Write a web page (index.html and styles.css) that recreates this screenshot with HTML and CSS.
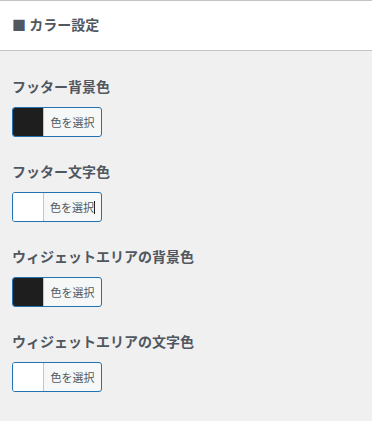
FILE: index.html
```html
<!DOCTYPE html>
<html lang="ja">
<head>
<meta charset="utf-8">
<link rel="stylesheet" href="styles.css">
</head>
<body>
<div class="header"><h3 class="section-title">■ カラー設定</h3></div>
<div class="controls">
  <div class="control">
    <span class="control-title">フッター背景色</span>
    <button class="color-result"><span class="swatch dark"></span><span class="result-text">色を選択</span></button>
  </div>
  <div class="control">
    <span class="control-title">フッター文字色</span>
    <button class="color-result"><span class="swatch light"></span><span class="result-text">色を選択<span class="caret"></span></span></button>
  </div>
  <div class="control">
    <span class="control-title">ウィジェットエリアの背景色</span>
    <button class="color-result"><span class="swatch dark"></span><span class="result-text">色を選択</span></button>
  </div>
  <div class="control">
    <span class="control-title">ウィジェットエリアの文字色</span>
    <button class="color-result"><span class="swatch light"></span><span class="result-text">色を選択</span></button>
  </div>
</div>
</body>
</html>
```
FILE: styles.css
```css
html, body {
  margin: 0;
  padding: 0;
  background: #f0f0f1;
  font-family: "Noto Sans CJK JP", "Noto Sans", sans-serif;
  color: #50575e;
}
.header {
  background: #fff;
  border-top: 1px solid #c3c4c7;
  border-bottom: 1px solid #c3c4c7;
  height: 49px;
  box-sizing: border-box;
  height: 51px;
  display: flex;
  align-items: center;
  padding: 0 12px 4px;
}
.section-title {
  margin: 0;
  font-size: 14px;
  font-weight: 700;
  line-height: 20px;
  color: #50575e;
}
.controls {
  padding: 27px 12px 0;
  display: flex;
  flex-direction: column;
  gap: 26px;
}
.control {
  display: flex;
  flex-direction: column;
  align-items: flex-start;
}
.control-title {
  display: block;
  font-size: 14px;
  font-weight: 700;
  line-height: 16px;
  margin-bottom: 13px;
  color: #50575e;
}
.color-result {
  display: flex;
  align-items: stretch;
  box-sizing: border-box;
  width: 90px;
  height: 30px;
  padding: 0;
  margin: 0;
  border: 1px solid #2271b1;
  border-radius: 3px;
  overflow: hidden;
  background: #f6f7f7;
  font-family: inherit;
  cursor: pointer;
}
.swatch {
  width: 30px;
  flex: none;
}
.swatch.dark { background: #1e1e1e; }
.swatch.light { background: #fff; }
.result-text {
  flex: 1;
  border-left: 1px solid #c3c4c7;
  display: flex;
  align-items: center;
  justify-content: center;
  font-size: 11px;
  color: #50575e;
}
.caret {
  display: inline-block;
  width: 1px;
  height: 13px;
  background: #1d2327;
}
```
